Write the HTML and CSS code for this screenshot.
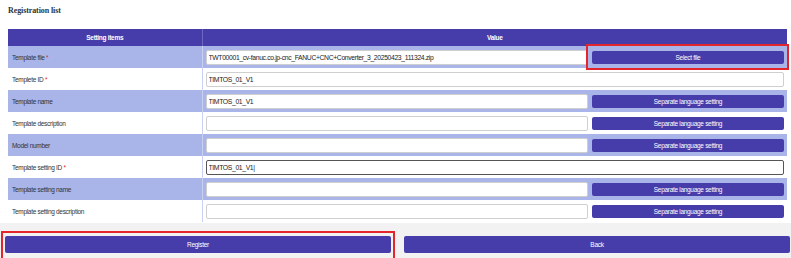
FILE: index.html
```html
<!DOCTYPE html>
<html lang="en">
<head>
    <meta charset="UTF-8">
    <meta name="viewport" content="width=device-width, initial-scale=1.0">
    <title>Registration list</title>
    <link rel="stylesheet" href="styles.css">
</head>
<body>
    <h1 class="page-title">Registration list</h1>

    <table class="reg-table">
        <thead>
            <tr>
                <th class="col-item">Setting items</th>
                <th>Value</th>
            </tr>
        </thead>
        <tbody>
            <tr class="shaded">
                <td class="label">Template file <span class="req">*</span></td>
                <td>
                    <div class="value">
                        <input type="text" value="TWT00001_cv-fanuc.co.jp-cnc_FANUC+CNC+Converter_3_20250423_111324.zip">
                        <span class="mark mark-side"><button class="btn side">Select file</button></span>
                    </div>
                </td>
            </tr>
            <tr>
                <td class="label">Templete ID <span class="req">*</span></td>
                <td>
                    <div class="value">
                        <input type="text" value="TIMTOS_01_V1">
                    </div>
                </td>
            </tr>
            <tr class="shaded">
                <td class="label">Template name</td>
                <td>
                    <div class="value">
                        <input type="text" value="TIMTOS_01_V1">
                        <button class="btn side">Separate language setting</button>
                    </div>
                </td>
            </tr>
            <tr>
                <td class="label">Template description</td>
                <td>
                    <div class="value">
                        <input type="text" value="">
                        <button class="btn side">Separate language setting</button>
                    </div>
                </td>
            </tr>
            <tr class="shaded">
                <td class="label">Model number</td>
                <td>
                    <div class="value">
                        <input type="text" value="">
                        <button class="btn side">Separate language setting</button>
                    </div>
                </td>
            </tr>
            <tr>
                <td class="label">Template setting ID <span class="req">*</span></td>
                <td>
                    <div class="value">
                        <input type="text" class="focused" value="TIMTOS_01_V1|">
                    </div>
                </td>
            </tr>
            <tr class="shaded">
                <td class="label">Template setting name</td>
                <td>
                    <div class="value">
                        <input type="text" value="">
                        <button class="btn side">Separate language setting</button>
                    </div>
                </td>
            </tr>
            <tr>
                <td class="label">Template setting description</td>
                <td>
                    <div class="value">
                        <input type="text" value="">
                        <button class="btn side">Separate language setting</button>
                    </div>
                </td>
            </tr>
        </tbody>
    </table>

    <div class="footer">
        <span class="mark mark-wide"><button class="btn wide">Register</button></span>
        <button class="btn wide">Back</button>
    </div>
</body>
</html>
```

FILE: styles.css
```css
:root {
    --purple: #463caa;
    --row-blue: #a9b5e9;
    --footer-bg: #f2f2f2;
    --mark-red: #e3262b;
    --text-dark: #333;
}

* {
    margin: 0;
    padding: 0;
    box-sizing: border-box;
}

body {
    background: #fff;
    font-family: 'Liberation Sans', Arial, sans-serif;
    font-size: 6.5px;
    letter-spacing: -0.3px;
    color: var(--text-dark);
}

.page-title {
    height: 29px;
    padding: 6px 0 0 8px;
    font-family: 'Liberation Serif', 'Times New Roman', serif;
    font-size: 8px;
    font-weight: bold;
    letter-spacing: -0.1px;
    color: #333;
}

.reg-table {
    margin-left: 8px;
    width: 779px;
    border-collapse: collapse;
    table-layout: fixed;
}

.reg-table th {
    height: 17px;
    background: var(--purple);
    color: #fff;
    font-weight: bold;
    text-align: center;
}

.reg-table th.col-item {
    width: 194px;
    border-right: 1px solid #6e66c0;
}

.reg-table td {
    height: 22px;
    padding: 0 3px;
}

.reg-table tr.shaded td {
    background: var(--row-blue);
}

.reg-table td.label {
    padding-left: 4px;
    border-right: 1px solid #c9d0f1;
}

.req {
    color: var(--mark-red);
}

.value {
    display: flex;
    align-items: center;
    gap: 4px;
}

.value input {
    flex: 1;
    min-width: 0;
    height: 15px;
    padding: 0 2px;
    border: 1px solid #cfcfcf;
    border-radius: 2px;
    background: #fff;
    font-family: 'Liberation Sans', Arial, sans-serif;
    font-size: 6.8px;
    line-height: 15px;
    letter-spacing: -0.35px;
    color: #222;
}

.value input.focused {
    border: 1px solid #555;
}

.btn {
    border: none;
    border-radius: 2px;
    background: var(--purple);
    color: #fff;
    font-family: 'Liberation Sans', Arial, sans-serif;
    font-size: 6.5px;
    letter-spacing: -0.3px;
    cursor: pointer;
}

.btn.side {
    width: 192px;
    height: 13px;
}

/* red annotation frames drawn over the layout */
.mark {
    position: relative;
    display: flex;
}

.mark::after {
    content: "";
    position: absolute;
    border: 2px solid var(--mark-red);
    pointer-events: none;
}

.mark-side::after {
    inset: -7px -5px -6px -6px;
}

.mark-wide {
    flex: 1;
}

.mark-wide::after {
    inset: -5px -4px -5px -4px;
}

.footer {
    display: flex;
    gap: 13px;
    margin-top: 1px;
    padding: 13px 1px 0 5px;
    height: 36px;
    background: var(--footer-bg);
}

.btn.wide {
    flex: 1;
    height: 17px;
}
```
